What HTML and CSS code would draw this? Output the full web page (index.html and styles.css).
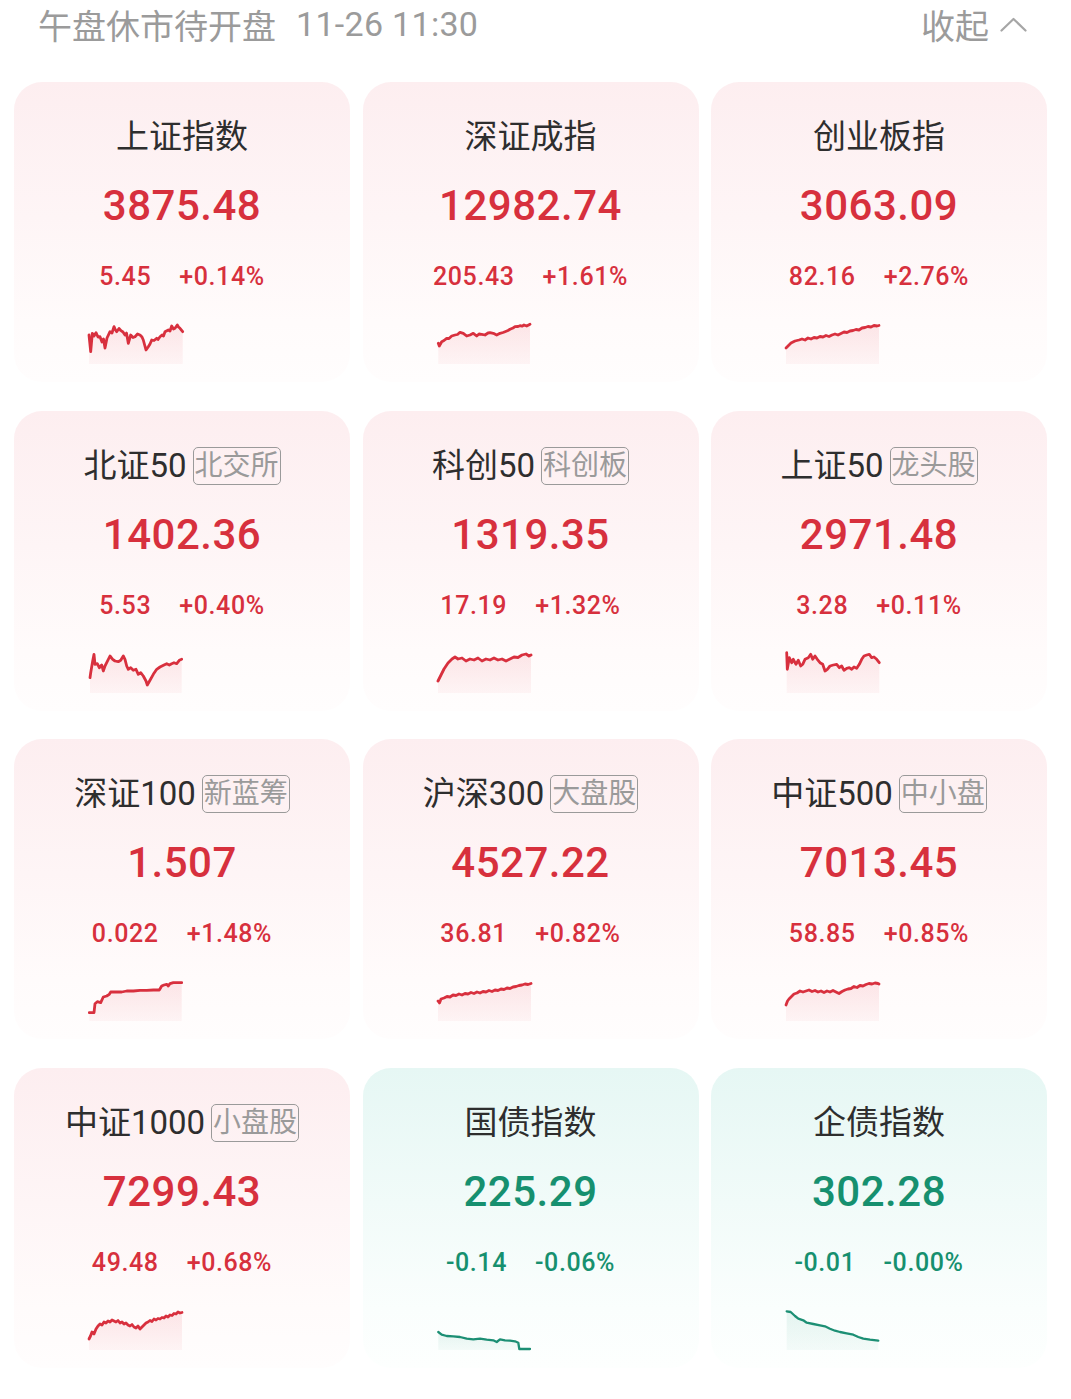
FILE: index.html
```html
<!DOCTYPE html>
<html lang="zh-CN">
<head>
<meta charset="utf-8">
<title>指数行情</title>
<link rel="stylesheet" href="styles.css">
</head>
<body>
<svg class="defs" aria-hidden="true">
  <defs>
    <linearGradient id="gR" x1="0" y1="0" x2="0" y2="1">
      <stop offset="0" stop-color="#e8505f" stop-opacity="0.13"/>
      <stop offset="1" stop-color="#e8505f" stop-opacity="0.05"/>
    </linearGradient>
    <linearGradient id="gG" x1="0" y1="0" x2="0" y2="1">
      <stop offset="0" stop-color="#1e9a7a" stop-opacity="0.10"/>
      <stop offset="1" stop-color="#1e9a7a" stop-opacity="0.04"/>
    </linearGradient>
  </defs>
</svg>

<div class="header">
  <div class="status">午盘休市待开盘<span class="time">11-26 11:30</span></div>
  <div class="collapse">收起<svg class="chev" viewBox="0 0 27 15" width="27" height="15"><polyline points="1.5,13.5 13.5,2 25.5,13.5"/></svg></div>
</div>

<div class="grid">
  <div class="card up">
    <div class="name">上证指数</div>
    <div class="price">3875.48</div>
    <div class="chg"><span>5.45</span><span>+0.14%</span></div>
    <svg class="spark" viewBox="0 0 94 44">
      <path class="area" d="M0,15 L1.7,31.7 L3.3,13.3 L5,16 L7,12.7 L9,17 L11,16.7 L13,22 L14.5,19 L16,28 L18,18 L21,11.7 L23,13 L25,6.7 L26.5,10 L27.7,11.7 L30,8.5 L32,10.7 L34,12 L36,15 L37.5,13 L39.3,23.3 L41.7,15 L44,17.5 L46,16.7 L48.5,14 L51,15 L53,17 L54.3,20 L57,30 L59.3,26.7 L61,24 L62.7,20 L65,20.5 L67.7,18.3 L69,19.5 L71,16.7 L73,15 L74.5,16 L76,11.7 L79.3,10 L81,11 L82.7,6 L84.5,9 L86,8.3 L88.3,5 L89.5,7 L91,8.3 L93.7,11.7 L93.7,44 L0,44 Z"/>
      <path class="line" d="M0,15 L1.7,31.7 L3.3,13.3 L5,16 L7,12.7 L9,17 L11,16.7 L13,22 L14.5,19 L16,28 L18,18 L21,11.7 L23,13 L25,6.7 L26.5,10 L27.7,11.7 L30,8.5 L32,10.7 L34,12 L36,15 L37.5,13 L39.3,23.3 L41.7,15 L44,17.5 L46,16.7 L48.5,14 L51,15 L53,17 L54.3,20 L57,30 L59.3,26.7 L61,24 L62.7,20 L65,20.5 L67.7,18.3 L69,19.5 L71,16.7 L73,15 L74.5,16 L76,11.7 L79.3,10 L81,11 L82.7,6 L84.5,9 L86,8.3 L88.3,5 L89.5,7 L91,8.3 L93.7,11.7"/>
    </svg>
  </div>

  <div class="card up">
    <div class="name">深证成指</div>
    <div class="price">12982.74</div>
    <div class="chg"><span>205.43</span><span>+1.61%</span></div>
    <svg class="spark" viewBox="0 0 94 44">
      <path class="area" d="M0.3,23.3 L1.3,26 L3.7,21.7 L6,20.5 L8.7,18.3 L11,18.5 L13.7,16 L17,15 L19.5,14.5 L22,12.3 L25.3,13.3 L28.7,16 L32,15 L35.3,13.3 L38.7,16 L41,14 L43.7,14.3 L47,15 L50,13 L52,12.7 L55.3,13.3 L58.7,15 L62,13.3 L65,12.5 L67,11.7 L70,10.5 L72,9.3 L75,8 L77,6.7 L80,6.5 L82,5.7 L84,6.2 L86,5 L88.7,6 L92,4.3 L92,44 L0.3,44 Z"/>
      <path class="line" d="M0.3,23.3 L1.3,26 L3.7,21.7 L6,20.5 L8.7,18.3 L11,18.5 L13.7,16 L17,15 L19.5,14.5 L22,12.3 L25.3,13.3 L28.7,16 L32,15 L35.3,13.3 L38.7,16 L41,14 L43.7,14.3 L47,15 L50,13 L52,12.7 L55.3,13.3 L58.7,15 L62,13.3 L65,12.5 L67,11.7 L70,10.5 L72,9.3 L75,8 L77,6.7 L80,6.5 L82,5.7 L84,6.2 L86,5 L88.7,6 L92,4.3"/>
    </svg>
  </div>

  <div class="card up">
    <div class="name">创业板指</div>
    <div class="price">3063.09</div>
    <div class="chg"><span>82.16</span><span>+2.76%</span></div>
    <svg class="spark" viewBox="0 0 94 44">
      <path class="area" d="M0,28 L2,26 L5,23 L9,21 L13,20 L16,19 L19,20 L22,18 L25,19 L28,17.5 L31,18 L34,16.5 L37,17 L40,15.5 L43,16.5 L46,15 L49,14 L52,15 L55,13.5 L58,12 L61,12.5 L64,11 L67,10.5 L70,9.5 L73,10 L76,8 L79,7.5 L82,6.5 L85,7 L88,5.5 L91,6 L93,5.5 L93,44 L0,44 Z"/>
      <path class="line" d="M0,28 L2,26 L5,23 L9,21 L13,20 L16,19 L19,20 L22,18 L25,19 L28,17.5 L31,18 L34,16.5 L37,17 L40,15.5 L43,16.5 L46,15 L49,14 L52,15 L55,13.5 L58,12 L61,12.5 L64,11 L67,10.5 L70,9.5 L73,10 L76,8 L79,7.5 L82,6.5 L85,7 L88,5.5 L91,6 L93,5.5"/>
    </svg>
  </div>

  <div class="card up">
    <div class="name">北证50<span class="tag">北交所</span></div>
    <div class="price">1402.36</div>
    <div class="chg"><span>5.53</span><span>+0.40%</span></div>
    <svg class="spark" viewBox="0 0 94 44">
      <path class="area" d="M1,28.7 L1.7,23.7 L3.7,12 L5,5.3 L6,15.3 L8.3,14.7 L10.3,18.7 L12.7,16 L14.3,22 L16,17 L17.7,13.7 L21,7 L23.7,10.3 L26,12 L29.3,12.7 L31.7,11.3 L34.3,7 L36,10.3 L37.7,17 L39.3,20.3 L41.7,18.7 L44.3,21.3 L47,20.3 L49.3,25.3 L51.7,23.7 L54.3,27 L57,32 L58.3,36 L61,31.3 L64.3,25.3 L67.7,20.3 L71,18 L75,16 L77.7,14.7 L80.3,16 L82.7,14.7 L85,13.7 L87.7,14.7 L90.3,11.3 L92.7,10.3 L92.7,44 L1,44 Z"/>
      <path class="line" d="M1,28.7 L1.7,23.7 L3.7,12 L5,5.3 L6,15.3 L8.3,14.7 L10.3,18.7 L12.7,16 L14.3,22 L16,17 L17.7,13.7 L21,7 L23.7,10.3 L26,12 L29.3,12.7 L31.7,11.3 L34.3,7 L36,10.3 L37.7,17 L39.3,20.3 L41.7,18.7 L44.3,21.3 L47,20.3 L49.3,25.3 L51.7,23.7 L54.3,27 L57,32 L58.3,36 L61,31.3 L64.3,25.3 L67.7,20.3 L71,18 L75,16 L77.7,14.7 L80.3,16 L82.7,14.7 L85,13.7 L87.7,14.7 L90.3,11.3 L92.7,10.3"/>
    </svg>
  </div>

  <div class="card up">
    <div class="name">科创50<span class="tag">科创板</span></div>
    <div class="price">1319.35</div>
    <div class="chg"><span>17.19</span><span>+1.32%</span></div>
    <svg class="spark" viewBox="0 0 94 44">
      <path class="area" d="M0,32 L3,26 L6,20 L10,14 L14,10 L17,8 L20,10 L24,9 L28,12 L32,10 L36,11 L40,9 L44,12 L48,10 L52,11 L56,9 L60,11 L64,10 L68,12 L72,10 L76,8 L80,8.5 L84,6 L88,5 L91,7 L93,6 L93,44 L0,44 Z"/>
      <path class="line" d="M0,32 L3,26 L6,20 L10,14 L14,10 L17,8 L20,10 L24,9 L28,12 L32,10 L36,11 L40,9 L44,12 L48,10 L52,11 L56,9 L60,11 L64,10 L68,12 L72,10 L76,8 L80,8.5 L84,6 L88,5 L91,7 L93,6"/>
    </svg>
  </div>

  <div class="card up">
    <div class="name">上证50<span class="tag">龙头股</span></div>
    <div class="price">2971.48</div>
    <div class="chg"><span>3.28</span><span>+0.11%</span></div>
    <svg class="spark" viewBox="0 0 94 44">
      <path class="area" d="M0.7,3.7 L1.3,20.3 L3.3,8.7 L5.7,13.7 L7.3,10.3 L10,15.3 L12.3,11.3 L14.7,17 L16.7,15.3 L19,10.3 L22.3,8.7 L24.7,5.3 L26.7,10.3 L29,7 L31.3,10.3 L34,13.7 L36.7,15.3 L39,22 L41.3,20.3 L44,17 L47.3,16 L50.7,15.3 L53.3,18.7 L55.7,17 L58,21.3 L60.7,19.3 L63.3,18.7 L65.7,20.3 L68,18 L70.7,19.3 L73.3,15.3 L75.7,10.3 L78,7 L80.7,6 L83.3,5.3 L85.7,8.7 L88,8 L90.7,10.3 L93.3,13.7 L93.3,44 L0.7,44 Z"/>
      <path class="line" d="M0.7,3.7 L1.3,20.3 L3.3,8.7 L5.7,13.7 L7.3,10.3 L10,15.3 L12.3,11.3 L14.7,17 L16.7,15.3 L19,10.3 L22.3,8.7 L24.7,5.3 L26.7,10.3 L29,7 L31.3,10.3 L34,13.7 L36.7,15.3 L39,22 L41.3,20.3 L44,17 L47.3,16 L50.7,15.3 L53.3,18.7 L55.7,17 L58,21.3 L60.7,19.3 L63.3,18.7 L65.7,20.3 L68,18 L70.7,19.3 L73.3,15.3 L75.7,10.3 L78,7 L80.7,6 L83.3,5.3 L85.7,8.7 L88,8 L90.7,10.3 L93.3,13.7"/>
    </svg>
  </div>

  <div class="card up">
    <div class="name">深证100<span class="tag">新蓝筹</span></div>
    <div class="price">1.507</div>
    <div class="chg"><span>0.022</span><span>+1.48%</span></div>
    <svg class="spark" viewBox="0 0 94 44">
      <path class="area" d="M0.3,35.7 L5,35.7 L6,26.7 L8.3,24.7 L11.7,25.7 L14.3,20 L17.7,19 L20.3,17.3 L21.7,15 L27.7,15 L32.7,15 L37.7,14 L44.3,14 L51,13.3 L57.7,13.3 L64.3,13 L70.3,13 L72.7,9 L75,8 L77.7,7.3 L79.3,9 L81,6.7 L84.3,5.7 L92.7,5.7 L92.7,44 L0.3,44 Z"/>
      <path class="line" d="M0.3,35.7 L5,35.7 L6,26.7 L8.3,24.7 L11.7,25.7 L14.3,20 L17.7,19 L20.3,17.3 L21.7,15 L27.7,15 L32.7,15 L37.7,14 L44.3,14 L51,13.3 L57.7,13.3 L64.3,13 L70.3,13 L72.7,9 L75,8 L77.7,7.3 L79.3,9 L81,6.7 L84.3,5.7 L92.7,5.7"/>
    </svg>
  </div>

  <div class="card up">
    <div class="name">沪深300<span class="tag">大盘股</span></div>
    <div class="price">4527.22</div>
    <div class="chg"><span>36.81</span><span>+0.82%</span></div>
    <svg class="spark" viewBox="0 0 94 44">
      <path class="area" d="M0,24 L1.5,26 L3,22 L6,21 L9,19.5 L12,20 L15,18 L18,18.5 L21,17 L24,18 L27,16.5 L30,17 L33,15.5 L36,16.5 L39,15 L42,16 L45,14.5 L48,15 L51,13.5 L54,14.5 L57,13 L60,13.5 L63,12 L66,12.5 L69,11 L72,11.5 L75,10 L78,9.5 L81,8.5 L84,8 L87,7 L90,7.5 L93,6.5 L93,44 L0,44 Z"/>
      <path class="line" d="M0,24 L1.5,26 L3,22 L6,21 L9,19.5 L12,20 L15,18 L18,18.5 L21,17 L24,18 L27,16.5 L30,17 L33,15.5 L36,16.5 L39,15 L42,16 L45,14.5 L48,15 L51,13.5 L54,14.5 L57,13 L60,13.5 L63,12 L66,12.5 L69,11 L72,11.5 L75,10 L78,9.5 L81,8.5 L84,8 L87,7 L90,7.5 L93,6.5"/>
    </svg>
  </div>

  <div class="card up">
    <div class="name">中证500<span class="tag">中小盘</span></div>
    <div class="price">7013.45</div>
    <div class="chg"><span>58.85</span><span>+0.85%</span></div>
    <svg class="spark" viewBox="0 0 94 44">
      <path class="area" d="M0,28 L1.5,24 L3,22 L5,20 L8,17 L11,16 L14,14 L17,15 L20,14 L23,13 L26,14.5 L29,13.5 L32,15 L35,14 L38,15.5 L41,14 L44,15 L47,13.5 L50,15 L53,16.5 L56,14.5 L59,13 L62,12 L65,11.5 L68,9.5 L71,10.5 L74,8.5 L77,9 L80,7.5 L83,6.5 L86,7 L89,6 L92,6.5 L93,7 L93,44 L0,44 Z"/>
      <path class="line" d="M0,28 L1.5,24 L3,22 L5,20 L8,17 L11,16 L14,14 L17,15 L20,14 L23,13 L26,14.5 L29,13.5 L32,15 L35,14 L38,15.5 L41,14 L44,15 L47,13.5 L50,15 L53,16.5 L56,14.5 L59,13 L62,12 L65,11.5 L68,9.5 L71,10.5 L74,8.5 L77,9 L80,7.5 L83,6.5 L86,7 L89,6 L92,6.5 L93,7"/>
    </svg>
  </div>

  <div class="card up">
    <div class="name">中证1000<span class="tag">小盘股</span></div>
    <div class="price">7299.43</div>
    <div class="chg"><span>49.48</span><span>+0.68%</span></div>
    <svg class="spark" viewBox="0 0 94 44">
      <path class="area" d="M0,33 L1.5,30 L3,26 L5,28 L7,23 L9,20 L11,18 L13,19 L15,16 L17,17 L19,15 L21,16 L23,14 L25,15 L27,16 L29,14.5 L31,17 L33,16 L35,18 L37,17 L39,19 L41,20 L43,18.5 L45,21 L47,22 L49,20 L51,23 L53,21 L55,19 L57,17 L59,16 L61,14.5 L63,15.5 L65,13 L67,14 L69,12.5 L71,13 L73,11.5 L75,12 L77,10 L79,11 L81,9 L83,9.5 L85,7.5 L87,8 L89,6 L91,7 L93,6.5 L93,44 L0,44 Z"/>
      <path class="line" d="M0,33 L1.5,30 L3,26 L5,28 L7,23 L9,20 L11,18 L13,19 L15,16 L17,17 L19,15 L21,16 L23,14 L25,15 L27,16 L29,14.5 L31,17 L33,16 L35,18 L37,17 L39,19 L41,20 L43,18.5 L45,21 L47,22 L49,20 L51,23 L53,21 L55,19 L57,17 L59,16 L61,14.5 L63,15.5 L65,13 L67,14 L69,12.5 L71,13 L73,11.5 L75,12 L77,10 L79,11 L81,9 L83,9.5 L85,7.5 L87,8 L89,6 L91,7 L93,6.5"/>
    </svg>
  </div>

  <div class="card down">
    <div class="name">国债指数</div>
    <div class="price">225.29</div>
    <div class="chg"><span>-0.14</span><span>-0.06%</span></div>
    <svg class="spark" viewBox="0 0 94 44">
      <path class="area" d="M0.3,26 L3.7,28.7 L8.7,30 L15.3,30.3 L22,31 L28.7,32.7 L35.3,33.3 L42,32.7 L48.7,33.7 L55.3,34.3 L58.7,36 L62,33.3 L67,34.3 L72,34.7 L77,35.3 L80.3,36.7 L81.3,43 L92,43 L92,44 L0.3,44 Z"/>
      <path class="line" d="M0.3,26 L3.7,28.7 L8.7,30 L15.3,30.3 L22,31 L28.7,32.7 L35.3,33.3 L42,32.7 L48.7,33.7 L55.3,34.3 L58.7,36 L62,33.3 L67,34.3 L72,34.7 L77,35.3 L80.3,36.7 L81.3,43 L92,43"/>
    </svg>
  </div>

  <div class="card down">
    <div class="name">企债指数</div>
    <div class="price">302.28</div>
    <div class="chg"><span>-0.01</span><span>-0.00%</span></div>
    <svg class="spark" viewBox="0 0 94 44">
      <path class="area" d="M0.7,5.3 L4.7,6 L9,10 L12.3,12.7 L17.3,14.3 L20.7,16.7 L27.3,18 L34,19.3 L39,20.3 L44,22.7 L49,24.7 L54,26 L60.7,27.3 L67.3,28.7 L72.3,31 L77.3,32.7 L84,33.7 L92.3,34.7 L92.3,44 L0.7,44 Z"/>
      <path class="line" d="M0.7,5.3 L4.7,6 L9,10 L12.3,12.7 L17.3,14.3 L20.7,16.7 L27.3,18 L34,19.3 L39,20.3 L44,22.7 L49,24.7 L54,26 L60.7,27.3 L67.3,28.7 L72.3,31 L77.3,32.7 L84,33.7 L92.3,34.7"/>
    </svg>
  </div>
</div>
</body>
</html>
```

FILE: styles.css
```css
html, body {
  margin: 0;
  padding: 0;
  background: #ffffff;
}

body {
  font-family: "Roboto", "Noto Sans CJK SC", sans-serif;
  width: 1071px;
}

.defs {
  position: absolute;
  width: 0;
  height: 0;
  overflow: hidden;
}

.header {
  display: flex;
  justify-content: space-between;
  align-items: center;
  height: 48px;
  padding: 0 44px 0 38px;
  color: #9b9b9b;
  font-size: 34px;
}

.status {
  display: flex;
  align-items: center;
  white-space: nowrap;
}

.status .time {
  margin-left: 20px;
  letter-spacing: 0.3px;
}

.collapse {
  display: flex;
  align-items: center;
  gap: 11px;
}

.chev {
  display: block;
}

.chev polyline {
  fill: none;
  stroke: #a6a6a6;
  stroke-width: 2.2;
  stroke-linecap: round;
  stroke-linejoin: round;
}

.grid {
  display: grid;
  grid-template-columns: repeat(3, 1fr);
  column-gap: 12.5px;
  row-gap: 28.5px;
  padding: 34px 24px 0 14px;
}

.card {
  height: 300px;
  box-sizing: border-box;
  border-radius: 28px;
  padding-top: 35px;
  display: flex;
  flex-direction: column;
  align-items: center;
}

.card.up {
  background: linear-gradient(180deg, #fdeef0 0%, #fef5f6 45%, #fffbfb 80%, #fffdfd 100%);
}

.card.down {
  background: linear-gradient(180deg, #e6f7f4 0%, #f1fbf9 45%, #fafefd 80%, #fdfffe 100%);
}

.name {
  display: flex;
  align-items: center;
  height: 40px;
  font-size: 33px;
  line-height: 40px;
  color: #2e2e2e;
  white-space: nowrap;
}

.tag {
  margin-left: 6px;
  padding: 0 1px;
  font-size: 28px;
  line-height: 36px;
  color: #9a9a9a;
  border: 1.5px solid #9a9a9a;
  border-radius: 5px;
}

.price {
  margin-top: 23px;
  font-size: 42px;
  line-height: 52px;
  font-weight: 500;
  letter-spacing: 0.5px;
}

.chg {
  display: flex;
  gap: 28px;
  margin-top: 29px;
  font-size: 25px;
  line-height: 32px;
  font-weight: 500;
  letter-spacing: 0.6px;
}

.up .price,
.up .chg {
  color: #d7303d;
}

.down .price,
.down .chg {
  color: #16906f;
}

.spark {
  display: block;
  align-self: flex-start;
  margin-top: 27px;
  margin-left: calc(50% - 93px);
  width: 94px;
  height: 44px;
  overflow: visible;
}

.spark .line {
  fill: none;
  stroke-width: 2.8;
  stroke-linejoin: round;
  stroke-linecap: round;
}

.up .spark .line {
  stroke: #d8303e;
}

.up .spark .area {
  fill: url(#gR);
}

.down .spark .line {
  stroke: #1c8f74;
  stroke-width: 2.3;
}

.down .spark .area {
  fill: url(#gG);
}
```
